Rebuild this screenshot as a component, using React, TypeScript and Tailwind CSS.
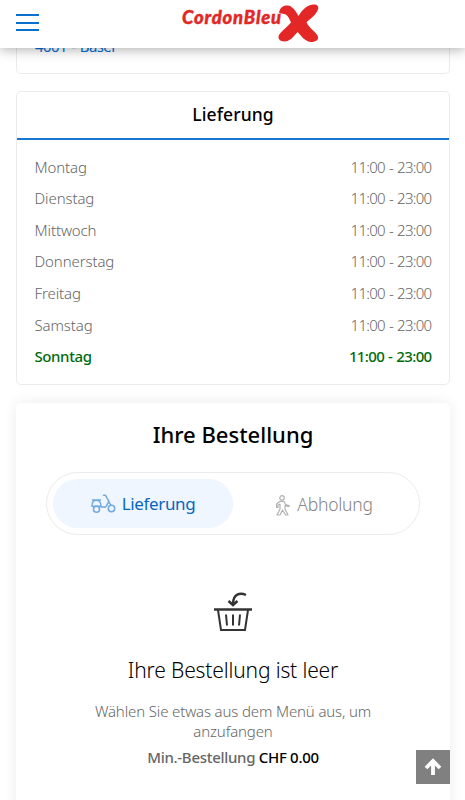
const hours = [
  { day: "Montag", time: "11:00 - 23:00" },
  { day: "Dienstag", time: "11:00 - 23:00" },
  { day: "Mittwoch", time: "11:00 - 23:00" },
  { day: "Donnerstag", time: "11:00 - 23:00" },
  { day: "Freitag", time: "11:00 - 23:00" },
  { day: "Samstag", time: "11:00 - 23:00" },
  { day: "Sonntag", time: "11:00 - 23:00", today: true },
];

function Logo() {
  return (
    <svg width="140" height="42" viewBox="0 0 140 42" className="block" fill="#e32726">
      <text
        x="2"
        y="22"
        textLength="100"
        lengthAdjust="spacingAndGlyphs"
        stroke="#e32726"
        strokeWidth="0.4"
        className="font-['Lato',sans-serif] text-[18px] font-black tracking-[0.8px] italic"
      >
        CordonBleu
      </text>
      {/* Brush cross */}
      <path d="M99.500 9c1-5 8-7 12-4 4 3 5 6 7 9 4-7 9-11 15-11.500 4 0 5.500 2 4.500 5-2 6-8 9-11.500 13 3 6 8 8 11 13 2 4-1 6.500-7 6.500-6-1-9-6-13-10-4 5-8 9.500-13 9.500-6 0-7.500-4.500-4.500-8 3-4 8-7 11-11-2-5-4-8-7-8.500-3-.5-6-.5-4.500-3z" />
    </svg>
  );
}

function ScooterIcon() {
  return (
    <svg width="25" height="20" viewBox="0 0 25 20" fill="none" stroke="#70a9df" strokeWidth="1.5" strokeLinecap="round" strokeLinejoin="round">
      <circle cx="5.500" cy="15.300" r="3" />
      <circle cx="20.500" cy="14.500" r="3.200" />
      <path d="M1.500 6h8M1 12.200c0-4 1.500-6 4.200-6s4.800 2.300 4.800 6H1zM10 13h4.500c1.500-1.500 2-3.500 3.500-5.500l-3.500-6.200h-2M17.500 7.500c1 1.500 1 2 2.500 3.500" />
    </svg>
  );
}

function WalkIcon() {
  return (
    <svg width="15" height="21" viewBox="0 0 15 21" fill="none" stroke="#b2b2b2" strokeWidth="1.2" strokeLinejoin="round">
      <circle cx="7" cy="2.900" r="2.200" />
      <path d="M4.500 6.500h4.500l1.500 3 3.500 1v1.200l-4-1v3.300l3 6h-2.300l-3.200-5-2.500 5H2l3-6v-5l-2 1v2.500H1.500V9z" />
    </svg>
  );
}

function BasketIcon() {
  return (
    <svg width="40" height="42" viewBox="0 0 40 42" fill="none" stroke="#333" strokeWidth="2">
      <path d="M1 18.500h38" strokeWidth="2.500" />
      <path d="M5 19l3 20h24l3-20M13 23.500l1 11M20 23.500v11M27 23.500l-1 11" />
      <path d="M33 4c-6-3-13-1-13 9M15.500 10l4.500 4 4.500-4" strokeWidth="2.500" />
    </svg>
  );
}

export default function App() {
  return (
    <div className="h-[800px] overflow-hidden bg-white font-['Noto_Sans',sans-serif] font-light text-[#666]">
      <header className="relative z-10 flex h-12 items-start bg-white pl-4 shadow-[0_1px_12px_rgba(0,0,0,0.35)]">
        <button aria-label="Menu" className="mt-[14px] flex h-[17px] w-[23px] flex-col justify-between">
          <span className="h-[2px] w-full bg-[#0870cf]" />
          <span className="h-[2px] w-full bg-[#0870cf]" />
          <span className="h-[2px] w-full bg-[#0870cf]" />
        </button>
        <div className="ml-[141px] mt-[2px]">
          <Logo />
        </div>
      </header>

      <main className="pr-[15px] pl-4">
        {/* Address */}
        <section className="-mt-2 flex h-[34px] items-start rounded-b-[5px] border border-t-0 border-[#ebebeb] pl-[18px]">
          <p className="text-[15px] leading-[12px] font-normal tracking-[-0.6px] text-[#0870cf]">
            4001 <span className="mx-px">-</span> Basel
          </p>
        </section>

        {/* Opening hours */}
        <section className="mt-[17px] h-[294px] rounded-[5px] border border-[#ebebeb]">
          <h2 className="h-[47.5px] border-b-2 border-[#1976d2] text-center text-[17.5px] leading-[45px] font-medium tracking-[0.1px] text-black">
            Lieferung
          </h2>
          <ul className="px-[17.5px] pt-[11.5px]">
            {hours.map(({ day, time, today }) => (
              <li
                key={day}
                className={
                  today
                    ? "flex h-[31.65px] items-center justify-between text-[15px] font-medium tracking-[-0.4px] text-[#006b0d]"
                    : "flex h-[31.65px] items-center justify-between text-[15px] tracking-[-0.1px]"
                }
              >
                <span>{day}</span>
                <span className={today ? "tracking-[-0.65px] [word-spacing:0.8px]" : "tracking-[-0.7px] [word-spacing:0.8px]"}>
                  {time}
                </span>
              </li>
            ))}
          </ul>
        </section>

        {/* Order */}
        <section className="mt-[18px] h-[420px] rounded-[5px] px-[30px] text-center shadow-[0_0_14px_rgba(0,0,0,0.08)]">
          <h2 className="pt-[14px] text-[22px] leading-[34px] font-medium text-black">Ihre Bestellung</h2>
          <div className="mt-[21px] flex h-[63px] rounded-full border border-[#ebebeb] p-[6px]">
            <button className="flex h-[49px] w-[180px] items-center justify-center gap-[6px] rounded-full bg-[#eff6ff] pt-px text-[17px] font-normal tracking-[-0.35px] text-[#0867bd]">
              <ScooterIcon />
              Lieferung
            </button>
            <button className="flex h-[49px] flex-1 items-center justify-center gap-[7px] pt-px pl-[2px] text-[17.5px] tracking-[-0.25px] text-[#858585]">
              <span className="mt-[3px]">
                <WalkIcon />
              </span>
              Abholung
            </button>
          </div>
          <div className="mt-[56px] flex justify-center">
            <BasketIcon />
          </div>
          <h3 className="mt-[20px] text-[21px] leading-[34px] tracking-[-0.15px] text-black">Ihre Bestellung ist leer</h3>
          <p className="mx-auto mt-[14px] w-[290px] text-[15px] leading-5 tracking-[-0.14px]">
            Wählen Sie etwas aus dem Menü aus, um anzufangen
          </p>
          <p className="mt-[6px] text-[15px] leading-5 font-medium tracking-[-0.3px]">
            Min.-Bestellung <span className="text-black">CHF 0.00</span>
          </p>
        </section>
      </main>

      <button
        aria-label="Nach oben"
        className="fixed top-[750px] left-[416px] z-20 flex size-[34px] items-center justify-center bg-[#808080]"
      >
        <svg width="18" height="18" viewBox="0 0 18 18" fill="none" stroke="white" strokeWidth="3.800">
          <path d="M9 17V3M2 10l7-7 7 7" />
        </svg>
      </button>
    </div>
  );
}
